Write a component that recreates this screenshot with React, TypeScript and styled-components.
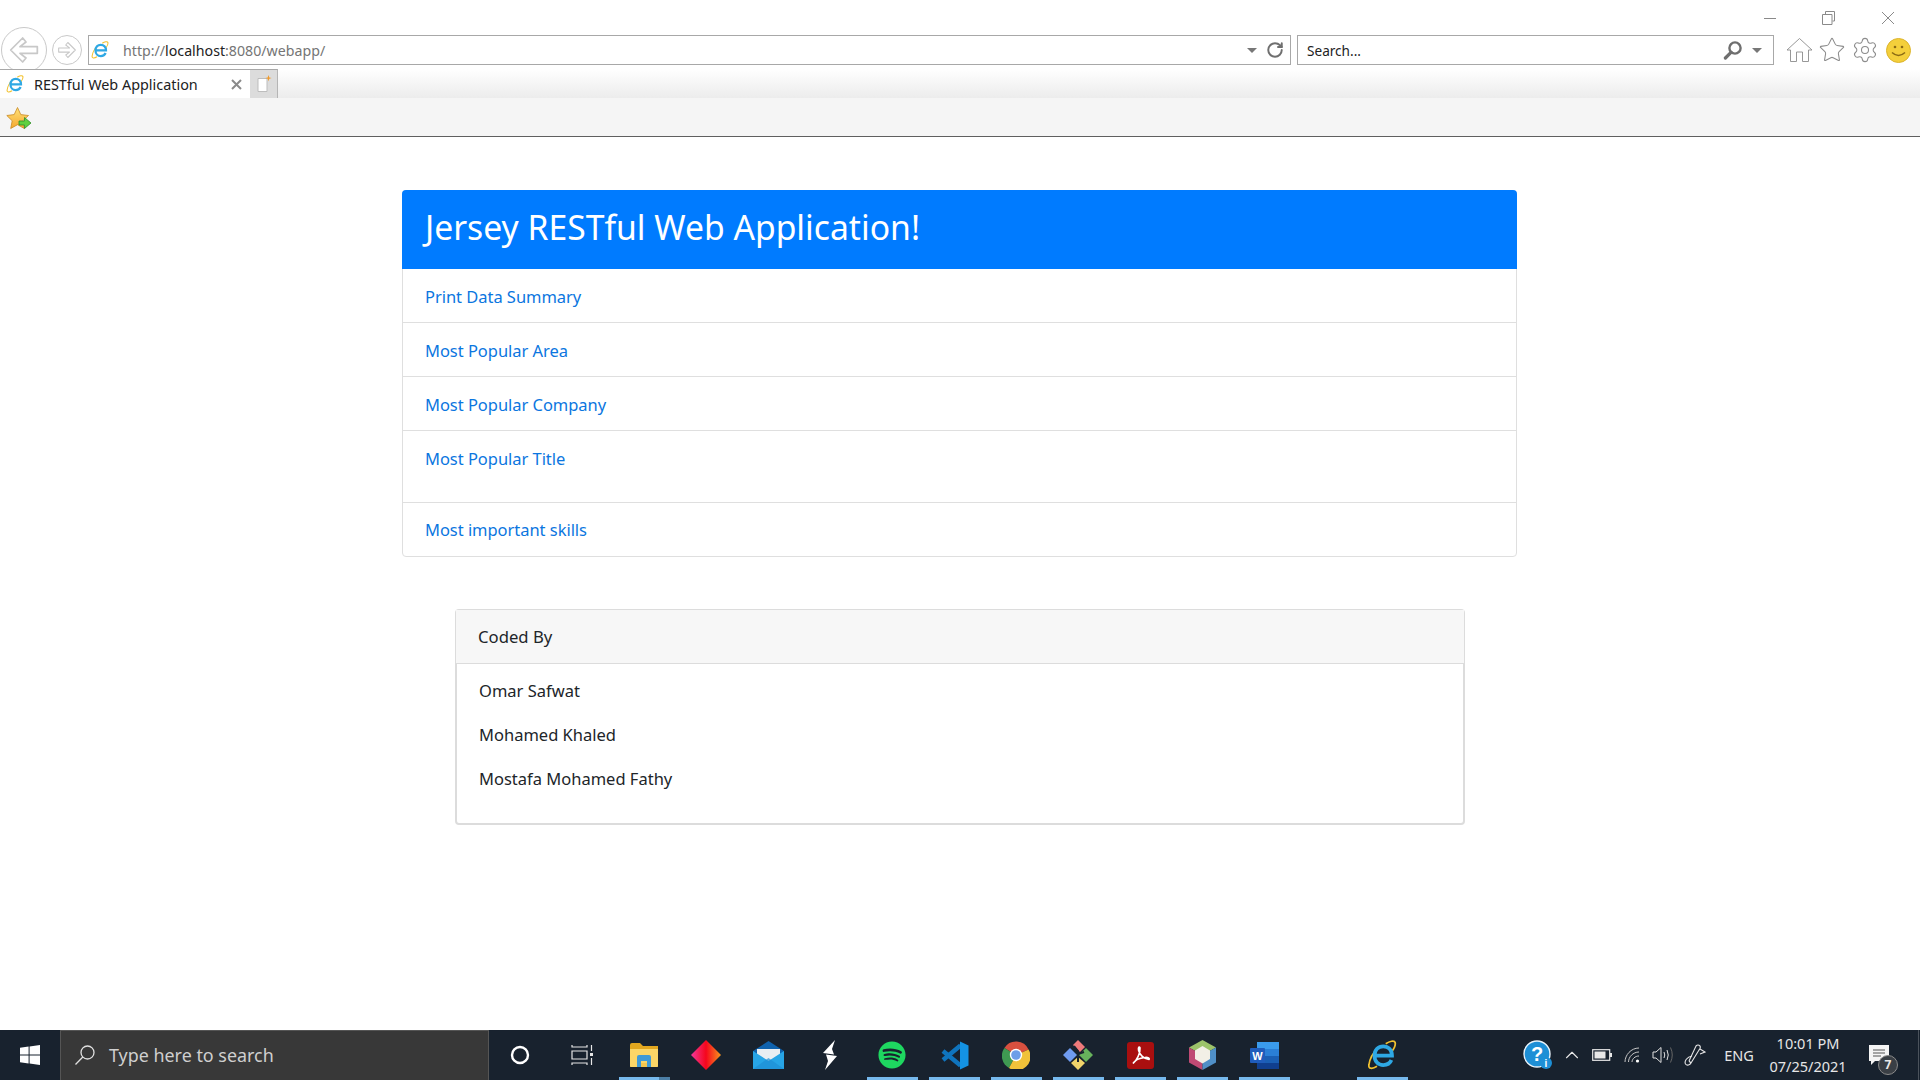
import React from "react";
import styled, { createGlobalStyle } from "styled-components";
import { Settings, Star, RotateCw, ChevronUp } from "lucide-react";
import { FaSpotify } from "react-icons/fa";

const GlobalStyle = createGlobalStyle`
  html, body {
    margin: 0;
    padding: 0;
    background: #fff;
    font-family: "Noto Sans", "Open Sans", Arial, sans-serif;
    color: #212529;
  }
  * { box-sizing: border-box; }
`;

const Page = styled.div`
  display: flex;
  flex-direction: column;
  height: 100vh;
  overflow: hidden;
`;

/* browser chrome */
const TitleRow = styled.div`
  height: 35px;
  display: flex;
  justify-content: flex-end;
  align-items: center;
  padding: 0 25px 0 0;
  gap: 45px;
`;

const NavRow = styled.div`
  height: 34px;
  display: flex;
  align-items: flex-start;
  padding-left: 1px;
`;

const RoundButton = styled.div<{ $size: number }>`
  width: ${(p) => p.$size}px;
  height: ${(p) => p.$size}px;
  flex: none;
  border: 1px solid #c9c9c9;
  border-radius: 50%;
  background: #fff;
  display: flex;
  align-items: center;
  justify-content: center;
  margin-top: ${(p) => (p.$size > 40 ? -8 : 0)}px;
  margin-left: ${(p) => (p.$size > 40 ? 0 : 5)}px;
  margin-right: ${(p) => (p.$size > 40 ? 0 : 6)}px;
`;

const AddressBox = styled.div`
  width: 1203px;
  height: 30px;
  flex: none;
  border: 1px solid #a8a8a8;
  display: flex;
  align-items: center;
  padding: 0 6px 0 2px;
  font-size: 14.2px;
  color: #757575;
`;

const AddressText = styled.span`
  margin-left: 14px;
  strong { font-weight: 400; color: #222; }
`;

const SearchBox = styled.div`
  width: 477px;
  height: 30px;
  flex: none;
  margin-left: 6px;
  border: 1px solid #a8a8a8;
  display: flex;
  align-items: center;
  padding: 0 11px 0 9px;
  font-size: 13.6px;
  color: #222;
`;

const PushRight = styled.div`
  margin-left: auto;
  display: flex;
  align-items: center;
  gap: 9px;
`;

const Caret = styled.span`
  width: 0;
  height: 0;
  border-left: 5px solid transparent;
  border-right: 5px solid transparent;
  border-top: 5px solid #777;
`;

const Tools = styled.div`
  display: flex;
  align-items: center;
  gap: 5px;
  margin-left: 12px;
  height: 30px;
`;

const TabRow = styled.div`
  height: 29px;
  display: flex;
  background: linear-gradient(#fff 0%, #ececec 100%);
`;

const Tab = styled.div`
  width: 250px;
  background: #fff;
  border-top: 1px solid #a8a8a8;
  display: flex;
  align-items: center;
  padding: 0 6px;
  font-size: 14.4px;
  color: #222;
  gap: 10px;
`;

const TabClose = styled.span`
  margin-left: auto;
  margin-right: 2px;
  display: flex;
`;

const NewTab = styled.div`
  width: 28px;
  background: #dcdcdc;
  border-top: 1px solid #a8a8a8;
  border-right: 1px solid #b5b5b5;
  display: flex;
  align-items: center;
  justify-content: center;
`;

const FavBar = styled.div`
  height: 39px;
  flex: none;
  background: #f5f5f5;
  border-bottom: 1px solid #5f5f5f;
  display: flex;
  align-items: center;
  padding: 3px 0 0 6px;
`;

/* page content */
const Main = styled.main`
  flex: 1;
  padding-top: 53px;
  display: flex;
  flex-direction: column;
  align-items: center;
`;

const LinkCard = styled.section`
  width: 1115px;
  margin-right: 1px;
  border: 1px solid #dfdfdf;
  border-radius: 4px;
`;

const Banner = styled.h1`
  margin: -1px -1px 0;
  height: 79px;
  padding: 0 23px;
  background: #007bff;
  border-radius: 4px 4px 0 0;
  color: #fff;
  font-size: 33.7px;
  font-weight: 400;
  line-height: 75px;
`;

const LinkRow = styled.div<{ $tall?: boolean }>`
  height: ${(p) => (p.$tall ? 72 : 54)}px;
  padding: 0 22px;
  line-height: 55px;
  border-bottom: 1px solid #dfdfdf;
  &:last-child { border-bottom: 0; height: 53px; line-height: 53px; }
`;

const RowLink = styled.a`
  color: #0b76e0;
  font-size: 16.5px;
  letter-spacing: -0.04px;
  text-decoration: none;
`;

const CreditCard = styled.section`
  width: 1010px;
  margin-top: 52px;
  height: 216px;
  border: 1px solid #dcdcdc;
  border-bottom-width: 2px;
  border-left-width: 2px;
  border-right-width: 2px;
  border-radius: 4px;
`;

const CreditHeader = styled.div`
  height: 54px;
  margin: 0 -1px;
  padding: 0 22px;
  background: #f7f7f7;
  border-bottom: 1px solid #dcdcdc;
  font-size: 16.7px;
  line-height: 54px;
`;

const CreditList = styled.div`
  padding: 5px 22px 0;
`;

const CreditName = styled.div`
  height: 44px;
  line-height: 44px;
  font-size: 16.5px;
`;

/* taskbar */
const Taskbar = styled.footer`
  height: 50px;
  flex: none;
  background: #18222e;
  display: flex;
  align-items: stretch;
  color: #e8e8e8;
`;

const StartButton = styled.div`
  width: 60px;
  display: flex;
  align-items: center;
  justify-content: center;
`;

const TaskSearch = styled.div`
  width: 429px;
  background: #383838;
  border: 1px solid #555;
  border-bottom: 0;
  display: flex;
  align-items: center;
  padding: 0 0 1px 13px;
  gap: 13px;
  font-size: 17.9px;
  color: #cfcfcf;
`;

const Slot = styled.div<{ $active?: boolean; $split?: boolean; $gap?: number }>`
  width: 62px;
  flex: none;
  position: relative;
  display: flex;
  align-items: center;
  justify-content: center;
  margin-left: ${(p) => p.$gap ?? 0}px;
  &::after {
    content: "";
    display: ${(p) => (p.$active ? "block" : "none")};
    position: absolute;
    left: 6px;
    right: 5px;
    bottom: 0;
    height: 3px;
    background: ${(p) => (p.$split ? "linear-gradient(90deg, #76b9ed 40px, #4c7fa6 40px)" : "#76b9ed")};
  }
`;

const Tray = styled.div`
  margin-left: auto;
  display: flex;
  align-items: center;
  padding-right: 1px;
`;

const TrayItem = styled.div<{ $w: number }>`
  width: ${(p) => p.$w}px;
  display: flex;
  align-items: center;
  justify-content: center;
`;

const NotifySlot = styled.div`
  width: 70px;
  padding-left: 21px;
  height: 20px;
  display: flex;
  position: relative;
`;

const Clock = styled.div`
  width: 80px;
  text-align: center;
  font-size: 14.5px;
  line-height: 23px;
  color: #e6e6e6;
`;

const TrayText = styled.span`
  font-size: 14.5px;
  color: #e6e6e6;
`;

const Badge = styled.span`
  position: absolute;
  left: 30px;
  top: 10px;
  width: 20px;
  height: 20px;
  border-radius: 50%;
  background: #3a3f45;
  border: 1px solid #8a8a8a;
  font-size: 12px;
  font-weight: 700;
  line-height: 18px;
  text-align: center;
  color: #e8e8e8;
`;

const EdgeLine = styled.div`
  width: 1px;
  height: 100%;
  background: #4a525b;
`;

/* drawn icons */
const IeLogo = ({ size }: { size: number }) => (
  <svg width={size} height={size} viewBox="0 0 24 24" fill="none">
    <path d="M9 6 C5 10 2 16 1.5 20 C1 23 4 23.5 8 21" stroke="#f2c230" strokeWidth="1.4" />
    <path d="M15 3 C18 1 22 0 22.5 2 C23 4 21.5 7 20 9" stroke="#f2c230" strokeWidth="1.4" />
    <path d="M6 12.5 H20 C20 8 17 5 13 5 C9 5 6 8 6 12.5 C6 17 9 20 13 20 C16 20 18.5 18.5 19.5 16" stroke="#2ea8e4" strokeWidth="3" />
  </svg>
);

const ArrowButton = ({ size, flip }: { size: number; flip?: boolean }) => (
  <svg width={size} height={size} viewBox="0 0 24 24" fill="#fff" stroke="#c8c8c8" strokeWidth="1.3" strokeLinejoin="round"
    style={{ transform: flip ? "scaleX(-1)" : undefined }}>
    <path d="M11 3 L2 12 L11 21 L13.5 18 L9 14.5 H22 V9.5 H9 L13.5 6 Z" />
  </svg>
);

const FavStar = () => (
  <svg width="26" height="26" viewBox="0 0 26 26">
    <defs>
      <linearGradient id="favstar" x1="0" y1="0" x2="0" y2="1">
        <stop offset="0" stopColor="#ffe27a" />
        <stop offset="1" stopColor="#f4a72c" />
      </linearGradient>
    </defs>
    <path d="M11.5 1.5 L14.8 8.6 L22.5 9.5 L16.8 14.8 L18.3 22.5 L11.5 18.7 L4.7 22.5 L6.2 14.8 L.8 9.5 L8.2 8.6 Z" fill="url(#favstar)" stroke="#c98a24" strokeWidth=".8" />
    <path d="M13 15 H18.5 V11.5 L25 17 L18.5 22.5 V19 H13 Z" fill="#5fd03f" stroke="#2f8e27" strokeWidth=".8" />
  </svg>
);

const NewTabIcon = () => (
  <svg width="16" height="18" viewBox="0 0 16 18">
    <path d="M2 3.5 H11 V16.5 H2 Z" fill="#fff" stroke="#bdbdbd" />
    <path d="M12.5 0 L13.3 2.4 L15.7 3 L13.3 3.8 L12.5 6.2 L11.7 3.8 L9.3 3 L11.7 2.4 Z" fill="#f09a2b" />
  </svg>
);

const Magnifier = () => (
  <svg width="20" height="20" viewBox="0 0 20 20" fill="none" stroke="#6f6f6f">
    <circle cx="12" cy="8" r="5.6" strokeWidth="2.4" />
    <path d="M8 12.4 L2.4 18" strokeWidth="3.2" strokeLinecap="round" />
  </svg>
);

const HomeIcon = () => (
  <svg width="27" height="26" viewBox="0 0 27 26" fill="#fff" stroke="#8c8c8c" strokeWidth=".9">
    <path d="M1 13 L13.5 1.5 L26 13 L22.5 13 V24.5 H16.5 V15 H10.5 V24.5 H4.5 V13 Z" />
  </svg>
);

const SmileSvg = styled.svg`
  margin-left: 2px;
`;

const SmileIcon = () => (
  <SmileSvg width="25" height="25" viewBox="0 0 25 25">
    <circle cx="12.5" cy="12.5" r="12" fill="#f4cf3b" stroke="#dcb42c" />
    <circle cx="9" cy="9" r="1.3" fill="#8a6a14" />
    <circle cx="16" cy="9" r="1.3" fill="#8a6a14" />
    <path d="M6 14.5 Q12.5 20.5 19 14.5" fill="none" stroke="#8a6a14" strokeWidth="1.5" />
  </SmileSvg>
);

const WindowMin = () => (
  <svg width="14" height="14" viewBox="0 0 14 14" stroke="#8a8a8a"><path d="M1 7.5 H13" /></svg>
);

const WindowRestore = () => (
  <svg width="14" height="14" viewBox="0 0 14 14" fill="none" stroke="#8a8a8a"><path d="M3.5 3 V.5 H12.5 V10 H10.5 M.5 3.5 H10 V13.5 H.5 Z" /></svg>
);

const WindowClose = () => (
  <svg width="14" height="14" viewBox="0 0 14 14" stroke="#8a8a8a"><path d="M1 1 L13 13 M13 1 L1 13" /></svg>
);

const TabX = () => (
  <svg width="11" height="11" viewBox="0 0 11 11" stroke="#8a8a8a" strokeWidth="2"><path d="M1 1 L10 10 M10 1 L1 10" /></svg>
);

const WindowsLogo = () => (
  <svg width="20" height="20" viewBox="0 0 20 20" fill="#fff">
    <path d="M0 2.8 L8.6 1.6 V9.4 H0 Z M9.6 1.5 L20 0 V9.4 H9.6 Z M0 10.6 H8.6 V18.4 L0 17.2 Z M9.6 10.6 H20 V20 L9.6 18.5 Z" />
  </svg>
);

const TaskSearchIcon = () => (
  <svg width="22" height="22" viewBox="0 0 22 22" fill="none" stroke="#e0e0e0" strokeWidth="1.3">
    <circle cx="13.5" cy="8.5" r="6.5" />
    <path d="M8.8 13 L1.5 20.5" />
  </svg>
);

const TaskView = () => (
  <svg width="22" height="22" viewBox="0 0 22 22" fill="none" stroke="#e6e6e6" strokeWidth="1.2">
    <path d="M1 1 V3 H16 V1 M1 7 H16 V15 H1 Z M1 21 V19 H16 V21 M20.5 1 V7 M20.5 14 V21" />
    <rect x="19" y="9" width="3" height="3" fill="#e6e6e6" stroke="none" />
  </svg>
);

const Explorer = () => (
  <svg width="30" height="26" viewBox="0 0 30 26">
    <path d="M1 3 Q1 1 3 1 H11 L14 4 H29 V24 Q29 25 28 25 H2 Q1 25 1 24 Z" fill="#e2a71f" />
    <path d="M1 7 H29 V24 Q29 25 28 25 H2 Q1 25 1 24 Z" fill="#fbd667" />
    <path d="M8 25 V15 Q8 13 10 13 H20 Q22 13 22 15 V25 H18 V19 H12 V25 Z" fill="#3f9ad6" />
    <rect x="12" y="21" width="6" height="4" fill="#f4c64d" />
  </svg>
);

const Diamond = () => (
  <svg width="30" height="30" viewBox="0 0 30 30">
    <defs>
      <linearGradient id="diam" x1="0" y1="0" x2="1" y2="0">
        <stop offset="0" stopColor="#f0399b" />
        <stop offset=".5" stopColor="#f5061c" />
        <stop offset="1" stopColor="#f6961e" />
      </linearGradient>
    </defs>
    <path d="M15 0 L30 15 L15 30 L0 15 Z" fill="url(#diam)" />
  </svg>
);

const Mail = () => (
  <svg width="31" height="28" viewBox="0 0 31 28">
    <path d="M0 10 L15.5 0 L31 10 V14 H0 Z" fill="#0f62ad" />
    <path d="M4 8 H27 V16 L15.5 22 L4 16 Z" fill="#e9eef2" />
    <path d="M0 10 L15.5 20 L31 10 V28 H0 Z" fill="#27a5e6" />
    <path d="M15.5 17 L31 28 H0 Z" fill="#1e8fd4" opacity=".7" />
  </svg>
);

const SublimeS = () => (
  <svg width="14" height="30" viewBox="0 0 14 30" fill="#fff">
    <path d="M12 0 L0 13 L11 14.6 L9 9 Z" />
    <path d="M14 16 L3 14.6 L5 21 L2 30 Z" />
  </svg>
);

const VsCode = () => (
  <svg width="29" height="29" viewBox="0 0 29 29" fill="none">
    <path d="M20.5 4.5 L3 19 M3 10 L20.5 24.5" stroke="#0f74bd" strokeWidth="4.5" />
    <path d="M20 0.5 L28.5 4.5 V24.5 L20 28.5 Z" fill="#1493e4" />
  </svg>
);

const Chrome = () => (
  <svg width="28" height="28" viewBox="0 0 28 28">
    <path d="M14 14 L2.4 7 A13.8 13.8 0 0 1 26.6 8.5 Z" fill="#d8503f" />
    <path d="M14 14 L7 27 A13.8 13.8 0 0 1 2.4 7 Z" fill="#3f9a52" />
    <path d="M14 14 L26.6 8.5 A13.8 13.8 0 0 1 7 27 Z" fill="#f0c23a" />
    <circle cx="14" cy="14" r="6.2" fill="#fff" />
    <circle cx="14" cy="14" r="4.8" fill="#6d9ee8" />
  </svg>
);

const GitTool = () => (
  <svg width="30" height="30" viewBox="0 0 30 30">
    <path d="M15 0 L22 7 L17 12 L10 5 Z" fill="#ef7a7a" />
    <path d="M7 8 L14 15 L7 22 L0 15 Z" fill="#6f9bf0" />
    <path d="M23 8 L30 15 L23 22 L16 15 Z" fill="#67b35c" />
    <path d="M15 17 L22 23 L15 30 L8 23 Z" fill="#f1d56b" />
    <path d="M11 6 L15 11 V22 M15 14 L21 12" stroke="#18222e" strokeWidth="2" fill="none" />
  </svg>
);

const Acrobat = () => (
  <svg width="27" height="27" viewBox="0 0 27 27" fill="none">
    <rect width="27" height="27" rx="3" fill="#a90f0f" />
    <path d="M6 21.5 C10 18 13.5 11 13 6 C12.6 4 11 5 11.5 8 C12.5 13 17 17 22 17.5 C23 16.5 21 15 18 15.5 C13 16 8 18 6 21.5 Z" stroke="#fff" strokeWidth="1.6" />
  </svg>
);

const NetBeans = () => (
  <svg width="27" height="30" viewBox="0 0 27 30">
    <path d="M13.5 0 L27 7.5 L13.5 15 L0 7.5 Z" fill="#9cc36a" />
    <path d="M0 7.5 L13.5 15 V30 L0 22.5 Z" fill="#bf4a74" />
    <path d="M27 7.5 L13.5 15 V30 L27 22.5 Z" fill="#4f8fc7" />
    <path d="M13.5 6 L21 10.5 V19 L13.5 23.5 L6 19 V10.5 Z" fill="#f2efe6" />
  </svg>
);

const Word = () => (
  <svg width="29" height="27" viewBox="0 0 29 27">
    <rect x="7" width="22" height="7" fill="#3a9bec" />
    <rect x="7" y="7" width="22" height="7" fill="#2a7fd6" />
    <rect x="7" y="14" width="22" height="7" fill="#1a5fb4" />
    <rect x="7" y="21" width="22" height="6" fill="#103f8f" />
    <rect y="6" width="15" height="15" rx="1" fill="#1f5cbb" />
    <text x="7.5" y="18" textAnchor="middle" fontSize="11" fontWeight="700" fill="#fff" fontFamily="Liberation Sans, sans-serif">W</text>
  </svg>
);

const HelpIcon = () => (
  <svg width="30" height="30" viewBox="0 0 30 30">
    <circle cx="14" cy="14" r="13" fill="#1d8fd6" stroke="#e8f3fb" strokeWidth="1.4" />
    <text x="14" y="21" textAnchor="middle" fontSize="20" fontWeight="700" fill="#fff" fontFamily="Liberation Sans, sans-serif">?</text>
    <circle cx="23" cy="23" r="6" fill="#1d8fd6" />
    <text x="23" y="27" textAnchor="middle" fontSize="10" fontWeight="700" fill="#fff" fontFamily="Liberation Sans, sans-serif">i</text>
  </svg>
);

const Battery = () => (
  <svg width="20" height="12" viewBox="0 0 20 12">
    <rect x=".7" y=".7" width="17" height="10.6" fill="none" stroke="#e8e8e8" strokeWidth="1.2" />
    <rect x="2.5" y="2.5" width="11" height="7" fill="#e8e8e8" />
    <rect x="18" y="4" width="2" height="4" fill="#e8e8e8" />
  </svg>
);

const Wifi = () => (
  <svg width="16" height="16" viewBox="0 0 16 16" fill="none" stroke="#c8c8c8" strokeWidth="1">
    <path d="M1 15 C1 8 7 1 15 1 M4.5 15 C4.5 10 9 5 15 5 M8 15 C8 12 11 9 15 9" />
    <circle cx="13.5" cy="14" r="1.6" fill="#fff" stroke="none" />
  </svg>
);

const Speaker = () => (
  <svg width="22" height="18" viewBox="0 0 22 18" fill="none" stroke="#e0e0e0" strokeWidth="1">
    <path d="M1 6 H4 L9 1.5 V16.5 L4 12 H1 Z M12 6 Q13.5 9 12 12 M15 4 Q17.5 9 15 14" />
    <path d="M18.5 1.5 Q22 9 18.5 16.5" stroke="#666" />
  </svg>
);

const PenIcon = () => (
  <svg width="22" height="24" viewBox="0 0 22 24" fill="none" stroke="#e6e6e6" strokeWidth="1.1">
    <path d="M5 18 L12 3 Q14 1 16 3 Q17 5 15 7 L7 20 M5 18 L7 20 M16 6 L21 9 L16 11" />
    <path d="M8 13 C3 14 0 18 1.5 21 C3 23 6 22 7 20" />
  </svg>
);

const NotifyIcon = () => (
  <svg width="20" height="20" viewBox="0 0 20 20">
    <path d="M0 0 H20 V16 H6 L2 20 V16 H0 Z" fill="#f4f4f4" />
    <path d="M4 5 H16 M4 8 H16 M4 11 H12" stroke="#555" strokeWidth="1" />
  </svg>
);

const links = ["Print Data Summary", "Most Popular Area", "Most Popular Company", "Most Popular Title", "Most important skills"];
const authors = ["Omar Safwat", "Mohamed Khaled", "Mostafa Mohamed Fathy"];

export default function App() {
  return (
    <Page>
      <GlobalStyle />
      <header>
        <TitleRow>
          <WindowMin />
          <WindowRestore />
          <WindowClose />
        </TitleRow>
        <NavRow>
          <RoundButton $size={46}>
            <ArrowButton size={32} />
          </RoundButton>
          <RoundButton $size={30}>
            <ArrowButton size={20} flip />
          </RoundButton>
          <AddressBox>
            <IeLogo size={18} />
            <AddressText>
              http://<strong>localhost</strong>:8080/webapp/
            </AddressText>
            <PushRight>
              <Caret />
              <RotateCw size={18} color="#6f6f6f" strokeWidth={2.6} />
            </PushRight>
          </AddressBox>
          <SearchBox>
            Search...
            <PushRight>
              <Magnifier />
              <Caret />
            </PushRight>
          </SearchBox>
          <Tools>
            <HomeIcon />
            <Star size={28} color="#8c8c8c" strokeWidth={0.9} />
            <Settings size={28} color="#8c8c8c" strokeWidth={0.9} />
            <SmileIcon />
          </Tools>
        </NavRow>
        <TabRow>
          <Tab>
            <IeLogo size={18} />
            RESTful Web Application
            <TabClose>
              <TabX />
            </TabClose>
          </Tab>
          <NewTab>
            <NewTabIcon />
          </NewTab>
        </TabRow>
        <FavBar>
          <FavStar />
        </FavBar>
      </header>
      <Main>
        <LinkCard>
          <Banner>Jersey RESTful Web Application!</Banner>
          {links.map((label, i) => (
            <LinkRow key={label} $tall={i === 3}>
              <RowLink href="#">{label}</RowLink>
            </LinkRow>
          ))}
        </LinkCard>
        <CreditCard>
          <CreditHeader>Coded By</CreditHeader>
          <CreditList>
            {authors.map((name) => (
              <CreditName key={name}>{name}</CreditName>
            ))}
          </CreditList>
        </CreditCard>
      </Main>
      <Taskbar>
        <StartButton>
          <WindowsLogo />
        </StartButton>
        <TaskSearch>
          <TaskSearchIcon />
          Type here to search
        </TaskSearch>
        <Slot>
          <svg width="20" height="20" viewBox="0 0 20 20" fill="none" stroke="#fff" strokeWidth="2.4">
            <circle cx="10" cy="10" r="8" />
          </svg>
        </Slot>
        <Slot><TaskView /></Slot>
        <Slot $active $split><Explorer /></Slot>
        <Slot><Diamond /></Slot>
        <Slot><Mail /></Slot>
        <Slot><SublimeS /></Slot>
        <Slot $active><FaSpotify size={28} color="#1ed760" /></Slot>
        <Slot $active><VsCode /></Slot>
        <Slot $active><Chrome /></Slot>
        <Slot $active><GitTool /></Slot>
        <Slot $active><Acrobat /></Slot>
        <Slot $active><NetBeans /></Slot>
        <Slot $active><Word /></Slot>
        <Slot $active $gap={56}><IeLogo size={30} /></Slot>
        <Tray>
          <TrayItem $w={40}><HelpIcon /></TrayItem>
          <TrayItem $w={28}><ChevronUp size={22} color="#e8e8e8" strokeWidth={1.2} /></TrayItem>
          <TrayItem $w={32}><Battery /></TrayItem>
          <TrayItem $w={28}><Wifi /></TrayItem>
          <TrayItem $w={34}><Speaker /></TrayItem>
          <TrayItem $w={30}><PenIcon /></TrayItem>
          <TrayItem $w={58}><TrayText>ENG</TrayText></TrayItem>
          <Clock>
            10:01 PM
            <br />
            07/25/2021
          </Clock>
          <NotifySlot>
            <NotifyIcon />
            <Badge>7</Badge>
          </NotifySlot>
          <EdgeLine />
        </Tray>
      </Taskbar>
    </Page>
  );
}
